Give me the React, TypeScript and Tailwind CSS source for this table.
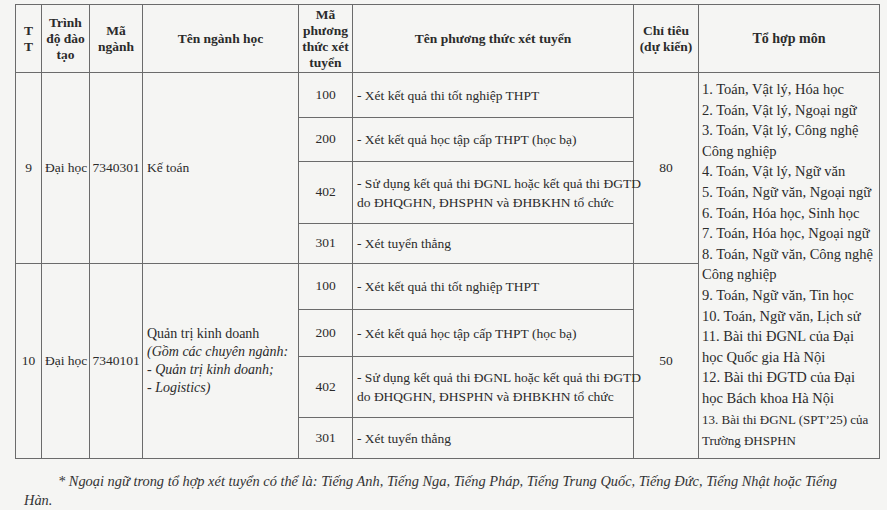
import React from 'react';

type Method = { code: string; lines: string[]; h: number };

const methods9: Method[] = [
  { code: '100', lines: ['- Xét kết quả thi tốt nghiệp THPT'], h: 45 },
  { code: '200', lines: ['- Xét kết quả học tập cấp THPT (học bạ)'], h: 44 },
  {
    code: '402',
    lines: ['- Sử dụng kết quả thi ĐGNL hoặc kết quả thi ĐGTD', 'do ĐHQGHN, ĐHSPHN và ĐHBKHN tổ chức'],
    h: 62,
  },
  { code: '301', lines: ['- Xét tuyển thẳng'], h: 40 },
];

const methods10: Method[] = [
  { code: '100', lines: ['- Xét kết quả thi tốt nghiệp THPT'], h: 46 },
  { code: '200', lines: ['- Xét kết quả học tập cấp THPT (học bạ)'], h: 47 },
  {
    code: '402',
    lines: ['- Sử dụng kết quả thi ĐGNL hoặc kết quả thi ĐGTD', 'do ĐHQGHN, ĐHSPHN và ĐHBKHN tổ chức'],
    h: 61,
  },
  { code: '301', lines: ['- Xét tuyển thẳng'], h: 41 },
];

const combos = [
  '1. Toán, Vật lý, Hóa học',
  '2. Toán, Vật lý, Ngoại ngữ',
  '3. Toán, Vật lý, Công nghệ',
  'Công nghiệp',
  '4. Toán, Vật lý, Ngữ văn',
  '5. Toán, Ngữ văn, Ngoại ngữ',
  '6. Toán, Hóa học, Sinh học',
  '7. Toán, Hóa học, Ngoại ngữ',
  '8. Toán, Ngữ văn, Công nghệ',
  'Công nghiệp',
  '9. Toán, Ngữ văn, Tin học',
  '10. Toán, Ngữ văn, Lịch sử',
  '11. Bài thi ĐGNL của Đại',
  'học Quốc gia Hà Nội',
  '12. Bài thi ĐGTD của Đại',
  'học Bách khoa Hà Nội',
];

const cell = 'border border-[#6b6b6b] align-middle';

function MethodCells({ m }: { m: Method }) {
  return (
    <>
      <td className={`${cell} text-center`}>{m.code}</td>
      <td className={`${cell} px-[4px] leading-[19px] whitespace-nowrap`}>
        {m.lines.map((l, i) => (
          <div key={i}>{l}</div>
        ))}
      </td>
    </>
  );
}

function MajorRows({
  tt,
  code,
  name,
  quota,
  methods,
  withCombos,
}: {
  tt: string;
  code: string;
  name: React.ReactNode;
  quota: string;
  methods: Method[];
  withCombos: boolean;
}) {
  const [first, ...rest] = methods;
  return (
    <>
      <tr style={{ height: first.h }}>
        <td rowSpan={4} className={`${cell} text-center`}>{tt}</td>
        <td rowSpan={4} className={`${cell} px-[3px] whitespace-nowrap`}>Đại học</td>
        <td rowSpan={4} className={`${cell} px-[2px] text-center`}>{code}</td>
        <td rowSpan={4} className={`${cell} px-[4px]`}>{name}</td>
        <MethodCells m={first} />
        <td rowSpan={4} className={`${cell} text-center`}>{quota}</td>
        {withCombos && (
          <td rowSpan={8} className={`${cell} align-top pl-[3px] pt-[6px] text-[14.5px] leading-[20.6px] whitespace-nowrap`}>
            {combos.map((c, i) => (
              <div key={i}>{c}</div>
            ))}
            <div className="text-[13px] leading-[21px]">13. Bài thi ĐGNL (SPT’25) của</div>
            <div className="text-[13px] leading-[21px]">Trường ĐHSPHN</div>
          </td>
        )}
      </tr>
      {rest.map((m) => (
        <tr key={m.code} style={{ height: m.h }}>
          <MethodCells m={m} />
        </tr>
      ))}
    </>
  );
}

export default function App() {
  return (
    <div
      className="w-[887px] h-[510px] overflow-hidden bg-[#f5f5f3] text-[#2b2b2b] pl-[15px] pt-[4px]"
      style={{ fontFamily: '"Liberation Serif", "Times New Roman", serif' }}
    >
      <table className="table-fixed border-collapse w-[864px] text-[13.5px]">
        <colgroup>
          <col className="w-[26px]" />
          <col className="w-[48px]" />
          <col className="w-[53px]" />
          <col className="w-[156px]" />
          <col className="w-[54px]" />
          <col className="w-[281px]" />
          <col className="w-[65px]" />
          <col className="w-[181px]" />
        </colgroup>
        <thead>
          <tr className="h-[68px] font-bold text-center leading-[16px]">
            <th className={cell}>T<br />T</th>
            <th className={cell}>Trình<br />độ đào<br />tạo</th>
            <th className={cell}>Mã<br />ngành</th>
            <th className={cell}>Tên ngành học</th>
            <th className={cell}>Mã<br />phương<br />thức xét<br />tuyển</th>
            <th className={cell}>Tên phương thức xét tuyển</th>
            <th className={cell}>Chỉ tiêu<br />(dự kiến)</th>
            <th className={`${cell} text-[14px]`}>Tổ hợp môn</th>
          </tr>
        </thead>
        <tbody>
          <MajorRows tt="9" code="7340301" name="Kế toán" quota="80" methods={methods9} withCombos />
          <MajorRows
            tt="10"
            code="7340101"
            quota="50"
            methods={methods10}
            withCombos={false}
            name={
              <div className="leading-[18px] text-[14px]">
                <div>Quản trị kinh doanh</div>
                <div className="italic">(Gồm các chuyên ngành:</div>
                <div className="italic">- Quản trị kinh doanh;</div>
                <div className="italic">- Logistics)</div>
              </div>
            }
          />
        </tbody>
      </table>
      <p className="mt-[13px] ml-[9px] w-[822px] italic text-[14.4px] leading-[19px] text-[#333] indent-[34px]">
        * Ngoại ngữ trong tổ hợp xét tuyển có thể là: Tiếng Anh, Tiếng Nga, Tiếng Pháp, Tiếng Trung Quốc, Tiếng Đức, Tiếng Nhật hoặc Tiếng
        Hàn.
      </p>
    </div>
  );
}
